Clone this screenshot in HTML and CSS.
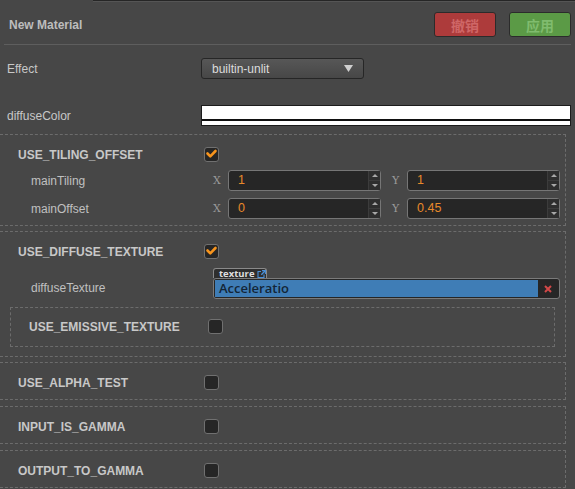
FILE: index.html
```html
<!DOCTYPE html>
<html>
<head>
<meta charset="utf-8">
<link rel="stylesheet" href="styles.css">
</head>
<body>
<div class="topline"></div>
<header class="header">
  <div class="title">New Material</div>
  <div class="actions">
    <button class="btn btn-revert">撤销</button>
    <button class="btn btn-apply">应用</button>
  </div>
</header>
<div class="sep"></div>

<div class="prop prop-effect">
  <div class="prop-label">Effect</div>
  <div class="select"><span>builtin-unlit</span><svg class="caret" width="9" height="7" viewBox="0 0 9 7"><path d="M0 0H9L4.5 7Z" fill="#cfcfcf"/></svg></div>
</div>
<div class="prop prop-color">
  <div class="prop-label">diffuseColor</div>
  <div class="color-field"><div class="c-main"></div><div class="c-line"></div><div class="c-alpha"></div></div>
</div>

<section class="box box-1">
  <div class="trow"><div class="tlabel">USE_TILING_OFFSET</div><span class="cb"><svg width="13" height="13" viewBox="0 0 13 13"><path d="M2.5 5.5L5.3 8.3L10.5 3" fill="none" stroke="#f7941d" stroke-width="2.6" stroke-linecap="round" stroke-linejoin="round"/></svg></span></div>
  <div class="prow">
    <div class="plabel">mainTiling</div>
    <div class="vec">
      <div class="axis"><span class="axis-l">X</span><div class="num"><span class="num-v">1</span><span class="spin"><i class="up"></i><i class="down"></i></span></div></div>
      <div class="axis"><span class="axis-l">Y</span><div class="num"><span class="num-v">1</span><span class="spin"><i class="up"></i><i class="down"></i></span></div></div>
    </div>
  </div>
  <div class="prow">
    <div class="plabel">mainOffset</div>
    <div class="vec">
      <div class="axis"><span class="axis-l">X</span><div class="num"><span class="num-v">0</span><span class="spin"><i class="up"></i><i class="down"></i></span></div></div>
      <div class="axis"><span class="axis-l">Y</span><div class="num"><span class="num-v">0.45</span><span class="spin"><i class="up"></i><i class="down"></i></span></div></div>
    </div>
  </div>
</section>

<section class="box box-2">
  <div class="trow"><div class="tlabel">USE_DIFFUSE_TEXTURE</div><span class="cb"><svg width="13" height="13" viewBox="0 0 13 13"><path d="M2.5 5.5L5.3 8.3L10.5 3" fill="none" stroke="#f7941d" stroke-width="2.6" stroke-linecap="round" stroke-linejoin="round"/></svg></span></div>
  <div class="tex-row">
    <div class="plabel">diffuseTexture</div>
    <div class="tex">
      <div class="tex-tab"><span>texture</span><svg width="9" height="8" viewBox="0 0 9 8"><path d="M4 1.5H1V7.5H7V4.5" fill="none" stroke="#4a90d9" stroke-width="1.1"/><path d="M5 0.6H8.4V4" fill="none" stroke="#4a90d9" stroke-width="1.1"/><path d="M8.2 0.8L4.3 4.7" stroke="#4a90d9" stroke-width="1.3"/></svg></div>
      <div class="tex-field">
        <div class="tex-val">Acceleratio</div>
        <div class="tex-clear"><svg width="8" height="8" viewBox="0 0 8 8"><path d="M1 1L7 7M7 1L1 7" stroke="#d24848" stroke-width="2"/></svg></div>
      </div>
    </div>
  </div>
  <div class="box-inner">
    <div class="trow"><div class="tlabel tlabel-inner">USE_EMISSIVE_TEXTURE</div><span class="cb"></span></div>
  </div>
</section>

<section class="box box-simple">
  <div class="trow"><div class="tlabel">USE_ALPHA_TEST</div><span class="cb"></span></div>
</section>
<section class="box box-simple">
  <div class="trow"><div class="tlabel">INPUT_IS_GAMMA</div><span class="cb"></span></div>
</section>
<section class="box box-simple">
  <div class="trow"><div class="tlabel">OUTPUT_TO_GAMMA</div><span class="cb"></span></div>
</section>
</body>
</html>
```

FILE: styles.css
```css
html, body {
  margin: 0;
  padding: 0;
}
body {
  background: #474747;
  font-family: "Liberation Sans", Arial, sans-serif;
  font-size: 12px;
  color: #c4c4c4;
  width: 575px;
  height: 489px;
  overflow: hidden;
}

.topline {
  height: 1px;
  margin-left: 93px;
  background: #262626;
  border-bottom: 1px solid #555;
}

.header {
  display: flex;
  align-items: center;
  justify-content: space-between;
  height: 42px;
  box-sizing: border-box;
  padding: 3px 4px 0 9px;
}
.title {
  font-weight: bold;
  color: #bdbdbd;
}
.actions {
  display: flex;
  gap: 13px;
}
.btn {
  width: 62px;
  height: 25px;
  box-sizing: border-box;
  border: 1px solid #2b2b2b;
  border-radius: 3px;
  padding: 0;
  font-family: "Noto Sans CJK SC", sans-serif;
  font-size: 14px;
  font-weight: bold;
  line-height: 22px;
}
.btn-revert {
  background: #ad3b3b;
  color: #cf6767;
}
.btn-apply {
  background: #5b9a46;
  color: #80bc6e;
}

.sep {
  height: 1px;
  background: #5e5e5e;
  margin: 0 4px;
}

.prop {
  display: flex;
  align-items: center;
  height: 21px;
}
.prop-effect {
  margin-top: 13px;
}
.prop-color {
  margin-top: 26px;
}
.prop-label {
  width: 201px;
  padding-left: 7px;
  box-sizing: border-box;
  color: #c8c8c8;
}
.select {
  width: 163px;
  height: 21px;
  box-sizing: border-box;
  border: 1px solid #262626;
  border-radius: 3px;
  background: linear-gradient(#575757, #474747);
  display: flex;
  align-items: center;
  justify-content: space-between;
  padding: 0 10px;
  color: #dcdcdc;
}
.color-field {
  width: 370px;
  height: 21px;
  box-sizing: border-box;
  border: 1px solid #1c1c1c;
  background: #fff;
  display: flex;
  flex-direction: column;
}
.c-main {
  height: 13px;
}
.c-line {
  height: 2px;
  background: #111;
}

.box {
  width: 566px;
  box-sizing: border-box;
  border: 1px dashed #6c6c6c;
  border-left: none;
  padding: 9px 5px 6px 18px;
  margin-top: 5px;
}
.box-1 {
  margin-top: 8px;
}
.box-simple + .box-simple {
  margin-top: 6px;
}

.trow {
  display: flex;
  align-items: center;
  height: 21px;
}
.tlabel {
  width: 186px;
  font-weight: bold;
  color: #c8c8c8;
}
.tlabel-inner {
  width: 179px;
}
.cb {
  width: 15px;
  height: 15px;
  box-sizing: border-box;
  border: 1px solid #707070;
  border-radius: 3px;
  background: #262626;
  display: flex;
  align-items: center;
  justify-content: center;
}

.prow {
  display: flex;
  align-items: center;
  height: 21px;
  margin-top: 5px;
}
.prow + .prow {
  margin-top: 7px;
}
.plabel {
  width: 186px;
  padding-left: 13px;
  box-sizing: border-box;
  color: #c0c0c0;
}
.vec {
  flex: 1;
  display: flex;
  gap: 11px;
  padding-left: 9px;
}
.axis {
  flex: 1;
  display: flex;
  align-items: center;
}
.axis-l {
  width: 15px;
  font-family: "DejaVu Serif", serif;
  font-size: 11px;
  color: #9a9a9a;
}
.num {
  flex: 1;
  height: 21px;
  box-sizing: border-box;
  border: 1px solid #767676;
  border-radius: 3px;
  background: #262626;
  display: flex;
}
.num-v {
  flex: 1;
  padding-left: 9px;
  line-height: 19px;
  font-size: 12.5px;
  color: #e8892a;
}
.spin {
  width: 11px;
  border-left: 1px solid #3c3c3c;
  background: #2e2e2e;
  display: flex;
  flex-direction: column;
}
.spin i {
  flex: 1;
  display: flex;
  align-items: center;
  justify-content: center;
}
.spin i.up {
  border-bottom: 1px solid #3c3c3c;
}
.spin i.up::after {
  content: "";
  border-left: 3px solid transparent;
  border-right: 3px solid transparent;
  border-bottom: 3px solid #a8a8a8;
}
.spin i.down::after {
  content: "";
  border-left: 3px solid transparent;
  border-right: 3px solid transparent;
  border-top: 3px solid #a8a8a8;
}

.tex-row {
  display: flex;
  align-items: flex-end;
  margin-top: 6px;
}
.tex-row .plabel {
  line-height: 21px;
}
.tex {
  flex: 1;
  margin-left: 9px;
  display: flex;
  flex-direction: column;
  align-items: flex-start;
}
.tex-tab {
  height: 10px;
  width: 54px;
  box-sizing: border-box;
  border: 1px solid #8a8a8a;
  border-bottom: none;
  border-radius: 3px 3px 0 0;
  background: #2e2e2e;
  padding: 0 0 0 5px;
  display: flex;
  align-items: center;
  gap: 2px;
  font-family: "Open Sans", sans-serif;
  font-size: 9.5px;
  font-weight: 700;
  line-height: 9px;
  color: #dedede;
}
.tex-field {
  align-self: stretch;
  height: 21px;
  box-sizing: border-box;
  border: 1px solid #7a7a7a;
  border-radius: 3px;
  background: #262626;
  padding: 1px;
  display: flex;
}
.tex-val {
  flex: 1;
  background: #3f7db6;
  color: #132537;
  font-family: "Open Sans", sans-serif;
  font-size: 13px;
  font-weight: 600;
  line-height: 17px;
  padding-left: 4px;
}
.tex-clear {
  width: 20px;
  display: flex;
  align-items: center;
  justify-content: center;
}

.box-inner {
  border: 1px dashed #6c6c6c;
  margin: 8px 5px 3px -8px;
  padding: 8px 0 9px 18px;
}
```
